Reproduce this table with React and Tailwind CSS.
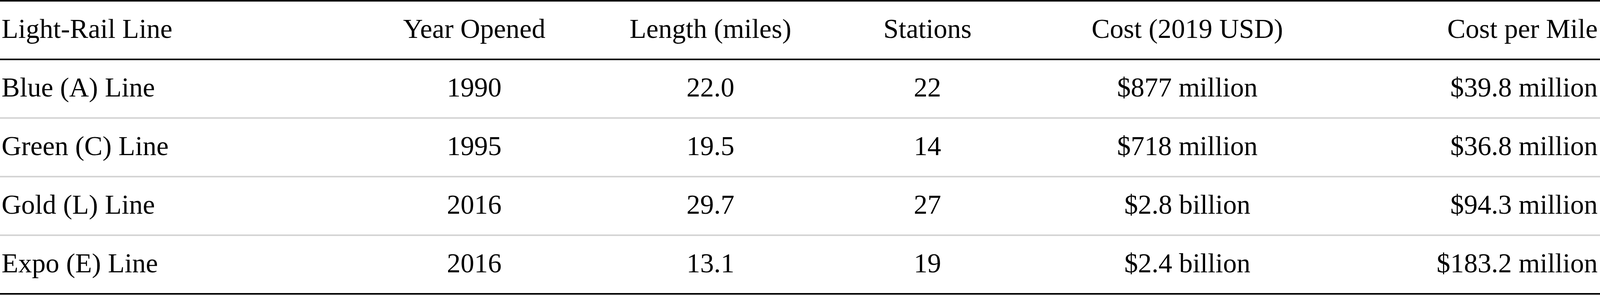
import React from 'react';

const rows = [
    ['Blue (A) Line', '1990', '22.0', '22', '$877 million', '$39.8 million'],
    ['Green (C) Line', '1995', '19.5', '14', '$718 million', '$36.8 million'],
    ['Gold (L) Line', '2016', '29.7', '27', '$2.8 billion', '$94.3 million'],
    ['Expo (E) Line', '2016', '13.1', '19', '$2.4 billion', '$183.2 million'],
];

const headers = ['Light-Rail Line', 'Year Opened', 'Length (miles)', 'Stations', 'Cost (2019 USD)', 'Cost per Mile'];

// first column left, last one right, the rest centred
const cellClass = [
    'text-left pl-[4px]',
    'text-center',
    'text-center',
    'text-center',
    'text-center',
    'text-right pr-[6px]',
];

function Row({ cells, last, header }) {
    let border = 'border-b-[4px] border-[#d4d4d4]';
    if (header || last) {
        border = 'border-b-[4px] border-black';
    }
    return (
        <div className={'grid grid-cols-[950fr_626fr_632fr_524fr_860fr_669fr] ' + border}>
            {cells.map((c, i) => (
                <div key={i} className={'pt-[30px] pb-[36px] leading-[80px] whitespace-nowrap ' + cellClass[i]}>
                    {c}
                </div>
            ))}
        </div>
    );
}

export default function App() {
    return (
        <div className="w-full bg-white text-black">
            <div className="border-t-[4px] border-black text-[70px] font-['Liberation_Serif',serif]">
                <Row cells={headers} header />
                {rows.map((r, i) => (
                    <Row key={i} cells={r} last={i === rows.length - 1} />
                ))}
            </div>
        </div>
    );
}
